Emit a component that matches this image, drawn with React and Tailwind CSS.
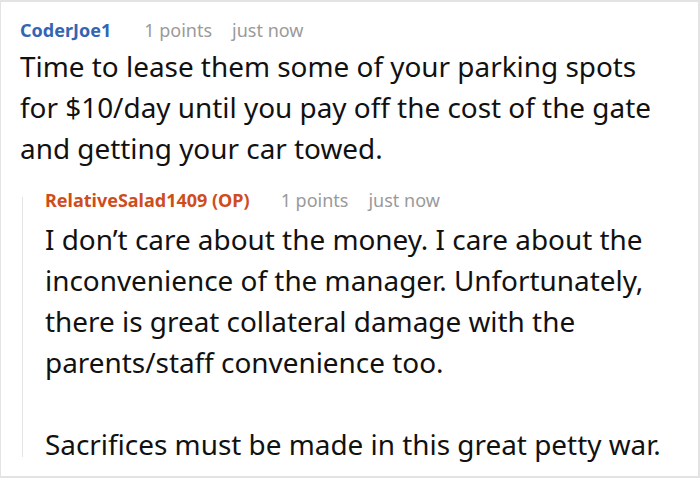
export default function App() {
  return (
    <div
      className="w-[700px] h-[478px] bg-white border-t-2 border-l border-r-2 border-b-2 border-[#e3e3e3] overflow-hidden"
      style={{ fontFamily: '"Noto Sans", sans-serif' }}
    >
      <div className="pl-[19px] pt-[16px]">
        <div className="flex items-baseline text-[18px] leading-[24px]">
          <span className="font-bold text-[#3464b4]">CoderJoe1</span>
          <span className="ml-[33px] text-[#9a9a9a]">1 points</span>
          <span className="ml-[20px] text-[#9a9a9a]">just now</span>
        </div>
        <div className="mt-[4px] text-[27.9px] leading-[41px] text-[#111] w-[660px]">
          Time to lease them some of your parking spots for $10/day until you pay off the cost of the gate and getting your car towed.
        </div>
      </div>
      <div className="flex mt-[19px] ml-[21px]">
        <div className="w-px bg-[#e4e4e4] mt-[9px] mb-[8px]" />
        <div className="pl-[22px]">
          <div className="flex items-baseline text-[18px] leading-[24px]">
            <span className="font-bold text-[#cf4d1c]">RelativeSalad1409 (OP)</span>
            <span className="ml-[31px] text-[#9a9a9a]">1 points</span>
            <span className="ml-[20px] text-[#9a9a9a]">just now</span>
          </div>
          <div className="mt-[7px] text-[27.9px] leading-[41px] text-[#111] w-[640px]">
            <p>I don’t care about the money. I care about the inconvenience of the manager. Unfortunately, there is great collateral damage with the parents/staff convenience too.</p>
            <p className="mt-[41px]">Sacrifices must be made in this great petty war.</p>
          </div>
        </div>
      </div>
    </div>
  );
}
